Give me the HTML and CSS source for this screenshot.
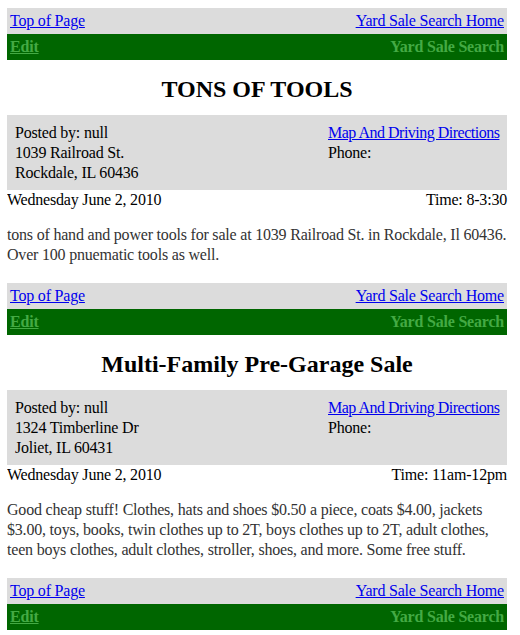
FILE: index.html
```html
<!DOCTYPE html>
<html>
<head>
<meta charset="utf-8">
<title>Yard Sale Search</title>
<link rel="stylesheet" href="styles.css">
</head>
<body>
<div class="page">
  <section class="sale">
    <div class="navbar">
      <a href="#">Top of Page</a>
      <a href="#">Yard Sale Search Home</a>
    </div>
    <div class="greenbar">
      <a href="#" class="edit">Edit</a>
      <span class="brand">Yard Sale Search</span>
    </div>
    <h2 class="title">TONS OF TOOLS</h2>
    <div class="info">
      <div class="info-left">
        <div>Posted by: null</div>
        <div>1039 Railroad St.</div>
        <div>Rockdale, IL 60436</div>
      </div>
      <div class="info-right">
        <div><a href="#" class="map">Map And Driving Directions</a></div>
        <div>Phone:</div>
      </div>
    </div>
    <div class="daterow">
      <span>Wednesday June 2, 2010</span>
      <span>Time: 8-3:30</span>
    </div>
    <p class="desc">tons of hand and power tools for sale at 1039 Railroad St. in Rockdale, Il 60436. Over 100 pnuematic tools as well.</p>
  </section>

  <section class="sale">
    <div class="navbar">
      <a href="#">Top of Page</a>
      <a href="#">Yard Sale Search Home</a>
    </div>
    <div class="greenbar">
      <a href="#" class="edit">Edit</a>
      <span class="brand">Yard Sale Search</span>
    </div>
    <h2 class="title">Multi-Family Pre-Garage Sale</h2>
    <div class="info">
      <div class="info-left">
        <div>Posted by: null</div>
        <div>1324 Timberline Dr</div>
        <div>Joliet, IL 60431</div>
      </div>
      <div class="info-right">
        <div><a href="#" class="map">Map And Driving Directions</a></div>
        <div>Phone:</div>
      </div>
    </div>
    <div class="daterow">
      <span>Wednesday June 2, 2010</span>
      <span>Time: 11am-12pm</span>
    </div>
    <p class="desc">Good cheap stuff! Clothes, hats and shoes $0.50 a piece, coats $4.00, jackets $3.00, toys, books, twin clothes up to 2T, boys clothes up to 2T, adult clothes, teen boys clothes, adult clothes, stroller, shoes, and more. Some free stuff.</p>
  </section>

  <section class="sale">
    <div class="navbar">
      <a href="#">Top of Page</a>
      <a href="#">Yard Sale Search Home</a>
    </div>
    <div class="greenbar">
      <a href="#" class="edit">Edit</a>
      <span class="brand">Yard Sale Search</span>
    </div>
  </section>
</div>
</body>
</html>
```
FILE: styles.css
```css
body {
  margin: 8px 0 0 7px;
  font-family: "Liberation Serif", "Times New Roman", serif;
  font-size: 16px;
  line-height: 20px;
  letter-spacing: -0.2px;
  color: #000;
  background: #fff;
}

.page {
  width: 500px;
}

a {
  color: #0000ee;
  text-decoration: underline;
}

.navbar {
  display: flex;
  justify-content: space-between;
  background: #dcdcdc;
  padding: 3px 3px;
}

.greenbar {
  display: flex;
  justify-content: space-between;
  background: #006600;
  padding: 3px 3px;
  font-weight: bold;
  color: #44aa44;
}

.greenbar .edit {
  color: #44aa44;
}

.title {
  margin: 15px 0 12px;
  font-size: 24px;
  line-height: 28px;
  font-weight: bold;
  letter-spacing: 0;
  text-align: center;
}

.info {
  display: grid;
  grid-template-columns: 313px 1fr;
  background: #dcdcdc;
  padding: 8px 8px 7px;
}

.info-right {
  white-space: nowrap;
}

.info-right .map {
  letter-spacing: -0.5px;
}

.daterow {
  display: flex;
  justify-content: space-between;
}

.desc {
  margin: 15px 0 18px;
  color: #333;
}
```
